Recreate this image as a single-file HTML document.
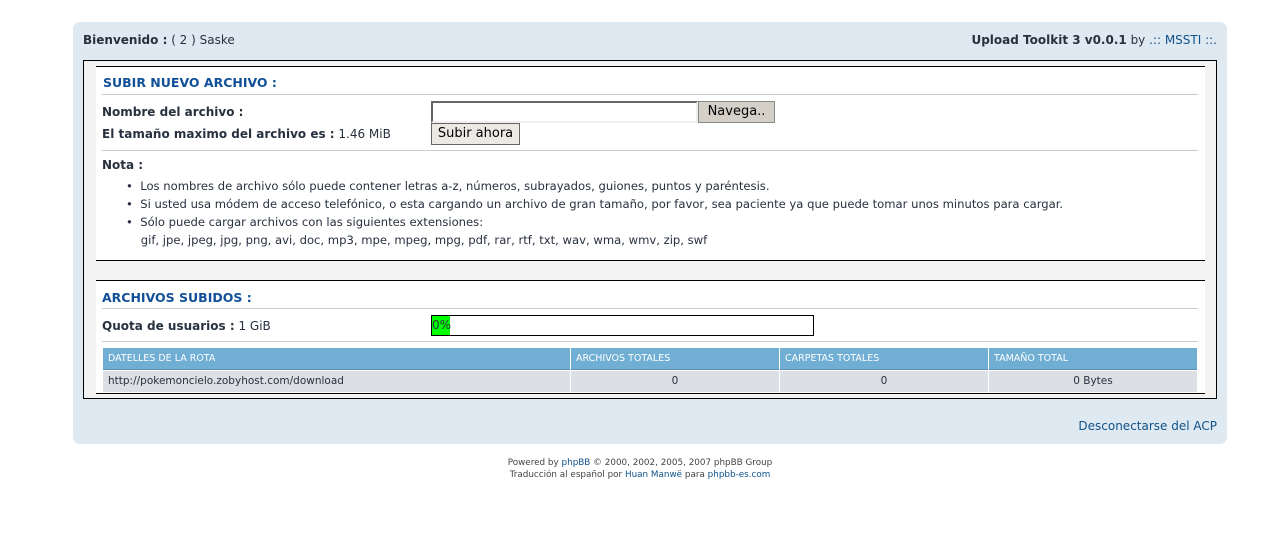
<!DOCTYPE html>
<html><head><meta charset="utf-8"><style>
*{margin:0;padding:0;box-sizing:border-box}
body{width:1280px;height:557px;background:#fff;font-family:"DejaVu Sans","Liberation Sans",sans-serif;color:#28313f;position:relative;overflow:hidden}
.abs{position:absolute;white-space:nowrap}
a{color:#105289;text-decoration:none}
.outer{position:absolute;left:73px;top:22px;width:1154px;height:422px;background:#dfe9f1;border-radius:7px}
.box{position:absolute;left:83px;top:60px;width:1134px;height:339px;border:1px solid #000;background:#f3f3f3}
.p1{position:absolute;left:96px;top:66px;width:1109px;height:195px;background:#fff;border-top:1px solid #000;border-bottom:1px solid #000}
.p2{position:absolute;left:96px;top:280px;width:1109px;height:114px;background:#fff;border-top:1px solid #000;border-bottom:1px solid #000}
.h{color:#115098;font-weight:bold;font-size:12.5px}
.hr{position:absolute;height:1px;background:#ccc}
.t{font-size:12px}
.th{position:absolute;top:348px;height:22px;background:#70aed3;color:#fff;font-size:9.5px;line-height:21px;padding-left:5px;border-bottom:1px solid #5a8fb8}
.td{position:absolute;top:371px;height:21px;background:#dcdfe3;font-size:10.5px;line-height:21px}
</style></head><body>
<div class="outer"></div>
<div class="abs t" style="left:83px;top:33px"><b>Bienvenido :</b> ( 2 ) Saske</div>
<div class="abs t" style="right:63px;top:33px"><b>Upload Toolkit 3 v0.0.1</b> by <a>.:: MSSTI ::.</a></div>
<div class="box"></div>
<div class="p1"></div>
<div class="p2"></div>
<div class="abs h" style="left:103px;top:75px">SUBIR NUEVO ARCHIVO :</div>
<div class="hr" style="left:102px;top:94px;width:1096px"></div>
<div class="abs t" style="left:102px;top:105px;font-weight:bold">Nombre del archivo :</div>
<div class="abs t" style="left:102px;top:127px"><b>El tamaño maximo del archivo es :</b> 1.46 MiB</div>
<div class="abs" style="left:431px;top:101px;width:267px;height:22px;border:2px solid #666;border-right-color:#eee;border-bottom-color:#eee;background:#fff"></div>
<div class="abs" style="left:698px;top:101px;width:77px;height:22px;background:#d4d0c8;border:1px solid #888;font-size:13px;line-height:20px;text-align:center;color:#000">Navega..</div>
<div class="abs" style="left:431px;top:123px;width:89px;height:22px;background:#ece9e4;border:1px solid #666;font-size:13px;line-height:20px;text-align:center;color:#000">Subir ahora</div>
<div class="hr" style="left:102px;top:150px;width:1096px"></div>
<div class="abs t" style="left:102px;top:158px;font-weight:bold">Nota :</div>
<div class="abs" style="left:126px;top:177px;line-height:18px;font-size:11.6px">
• &nbsp;Los nombres de archivo sólo puede contener letras a-z, números, subrayados, guiones, puntos y paréntesis.<br>
• &nbsp;Si usted usa módem de acceso telefónico, o esta cargando un archivo de gran tamaño, por favor, sea paciente ya que puede tomar unos minutos para cargar.<br>
• &nbsp;Sólo puede cargar archivos con las siguientes extensiones:<br>
&nbsp;&nbsp;&nbsp;&nbsp;gif, jpe, jpeg, jpg, png, avi, doc, mp3, mpe, mpeg, mpg, pdf, rar, rtf, txt, wav, wma, wmv, zip, swf</div>
<div class="abs h" style="left:102px;top:290px">ARCHIVOS SUBIDOS :</div>
<div class="hr" style="left:102px;top:308px;width:1096px"></div>
<div class="abs t" style="left:102px;top:319px"><b>Quota de usuarios :</b> 1 GiB</div>
<div class="abs" style="left:431px;top:315px;width:383px;height:21px;border:1px solid #000;background:#fff"><div style="width:18px;height:19px;background:#00ff00;font-size:12px;line-height:19px">0%</div></div>
<div class="hr" style="left:102px;top:341px;width:1096px"></div>
<div class="th" style="left:103px;width:467px">DATELLES DE LA ROTA</div>
<div class="th" style="left:571px;width:208px">ARCHIVOS TOTALES</div>
<div class="th" style="left:780px;width:208px">CARPETAS TOTALES</div>
<div class="th" style="left:989px;width:208px">TAMAÑO TOTAL</div>
<div class="td" style="left:103px;width:467px;padding-left:5px">http://pokemoncielo.zobyhost.com/download</div>
<div class="td" style="left:571px;width:208px;text-align:center">0</div>
<div class="td" style="left:780px;width:208px;text-align:center">0</div>
<div class="td" style="left:989px;width:208px;text-align:center">0 Bytes</div>
<div class="abs t" style="right:63px;top:419px"><a>Desconectarse del ACP</a></div>
<div class="abs" style="left:0;width:1280px;text-align:center;top:457px;font-size:8.8px;line-height:12px;color:#444">Powered by <a>phpBB</a> © 2000, 2002, 2005, 2007 phpBB Group<br>Traducción al español por <a>Huan Manwë</a> para <a>phpbb-es.com</a></div>
</body></html>
